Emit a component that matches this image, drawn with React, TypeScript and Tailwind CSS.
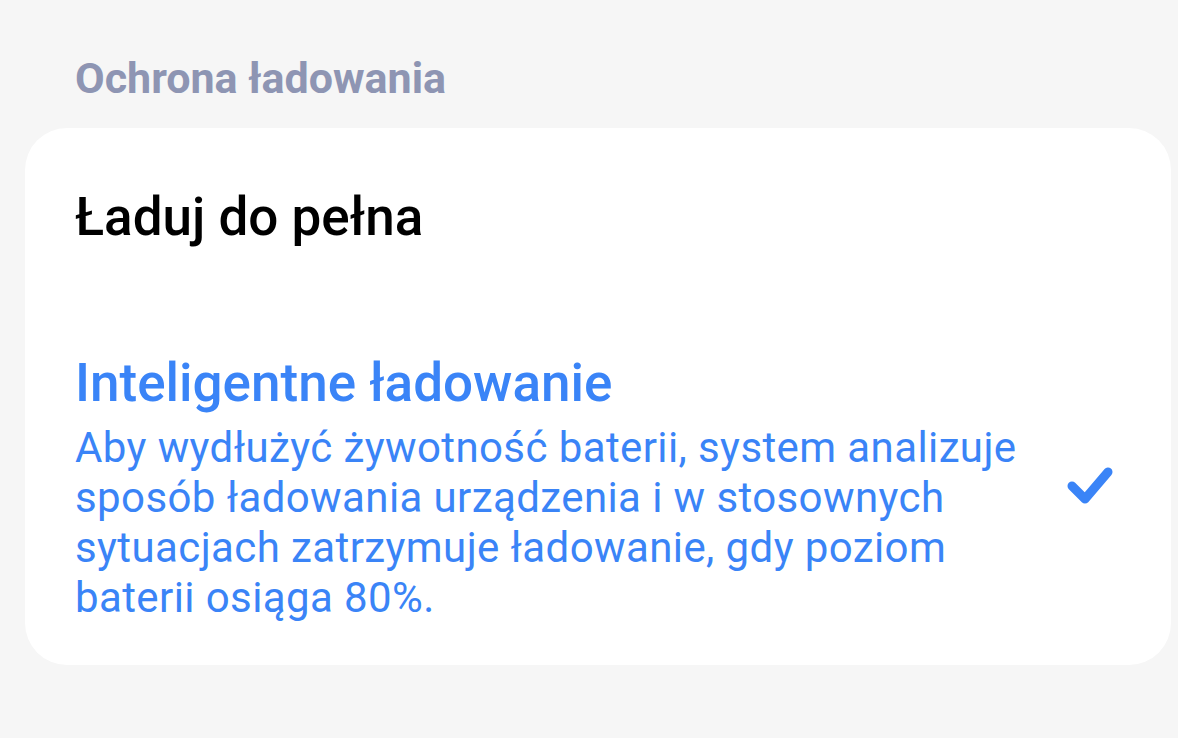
export default function App() {
  return (
    <div
      className="min-h-[738px] w-full bg-[#f6f6f6]"
      style={{ fontFamily: "Roboto, 'Noto Sans', sans-serif" }}
    >
      {/* Section header */}
      <div className="pl-[75px] pt-[52px] h-[128px]">
        <h2 className="text-[43px] leading-[52px] font-bold text-[#8e95b3]">
          Ochrona ładowania
        </h2>
      </div>

      {/* Options card */}
      <div className="mx-[25px] w-[1146px] bg-white rounded-[42px] pt-[58px] pb-[42px] pl-[50px] pr-[57px]">
        <div className="text-[53px] leading-[62px] font-medium text-black">
          Ładuj do pełna
        </div>

        <div className="mt-[104px] flex items-center">
          <div className="flex-1">
            <div className="text-[53px] leading-[62px] font-medium text-[#3a84f7]">
              Inteligentne ładowanie
            </div>
            <p className="mt-[9px] text-[42px] leading-[50px] tracking-[0.4px] text-[#3a84f7]">
              Aby wydłużyć żywotność baterii, system analizuje
              <br />
              sposób ładowania urządzenia i w stosownych
              <br />
              sytuacjach zatrzymuje ładowanie, gdy poziom
              <br />
              baterii osiąga 80%.
            </p>
          </div>
          <svg width="48" height="42" viewBox="0 0 48 42" className="shrink-0">
            <path
              d="M6 19 L19 32 L42 5"
              fill="none"
              stroke="#3a84f7"
              strokeWidth="9"
              strokeLinecap="round"
              strokeLinejoin="round"
            />
          </svg>
        </div>
      </div>
    </div>
  );
}
